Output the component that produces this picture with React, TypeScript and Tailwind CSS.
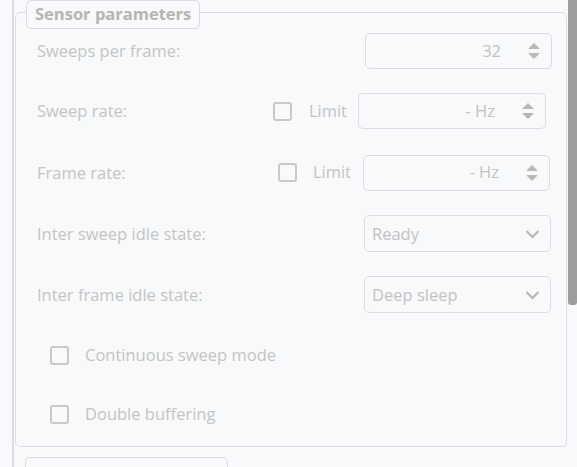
import React from "react";

const font = { fontFamily: '"Open Sans", "Noto Sans", sans-serif' };

function Spin({ value, w, mr }: { value: string; w: string; mr: string }) {
  return (
    <div className={`${w} ${mr} h-[36px] rounded-[5px] border border-[#dcdde0] bg-[#f8f9fa] flex items-center justify-end`}>
      <span className="text-[16.5px] text-[#c2c2c2] mr-[27px]">{value}</span>
      <svg width="12" height="18" viewBox="0 0 12 18" className="mr-[11px]">
        <path d="M1 6.5 L6 1.5 L11 6.5 Z" fill="#b8b8b8" stroke="#b8b8b8" strokeLinejoin="round" />
        <path d="M1 11.5 L6 16.5 L11 11.5 Z" fill="#b8b8b8" stroke="#b8b8b8" strokeLinejoin="round" />
      </svg>
    </div>
  );
}

function Combo({ value }: { value: string }) {
  return (
    <div className="w-[187px] mr-[15px] h-[37px] rounded-[5px] border border-[#dcdde0] bg-[#f8f9fa] flex items-center">
      <span className="text-[16.5px] text-[#c2c2c2] ml-[7px] flex-1 pt-[2px]">{value}</span>
      <svg width="15" height="10" viewBox="0 0 15 10" className="mr-[10px]">
        <path d="M1.5 2 L7.5 8 L13.5 2" fill="none" stroke="#b8b8b8" strokeWidth="2.2" />
      </svg>
    </div>
  );
}

function Check() {
  return <div className="w-[19px] h-[19px] rounded-[3px] border-2 border-[#c9c9c9] bg-[#f8f9fa] shrink-0" />;
}

export default function App() {
  return (
    <div style={font} className="w-[577px] h-[467px] bg-[#f8f9fa] overflow-hidden flex">
      <div className="flex-1 pl-[12px]">
        <div className="h-full border-l-2 border-[#dcdde0] pl-[1px] pt-[12px]">
          <div className="w-[552px] h-[435px] rounded-[5px] border border-[#dcdde0] flex flex-col">
            <div className="-mt-[13px] ml-[10px] w-[174px] h-[29px] rounded-[5px] border border-[#dcdde0] bg-[#f8f9fa] flex items-center pl-[8px]">
              <span className="text-[16.5px] font-bold text-[#b5b5b5] leading-none">Sensor parameters</span>
            </div>

            <div className="mt-[4px] h-[36px] flex items-center">
              <span className="ml-[21px] text-[16.5px] text-[#c4c4c4]">Sweeps per frame:</span>
              <div className="ml-auto"><Spin value="32" w="w-[187px]" mr="mr-[14px]" /></div>
            </div>

            <div className="mt-[24px] h-[36px] flex items-center">
              <span className="ml-[21px] text-[16.5px] text-[#c4c4c4]">Sweep rate:</span>
              <div className="ml-auto flex items-center">
                <Check />
                <span className="ml-[17px] mr-[11px] text-[16.5px] text-[#c4c4c4]">Limit</span>
                <Spin value="- Hz" w="w-[188px]" mr="mr-[20px]" />
              </div>
            </div>

            <div className="mt-[26px] h-[35px] flex items-center">
              <span className="ml-[21px] text-[16.5px] text-[#c4c4c4] pt-[1px]">Frame rate:</span>
              <div className="ml-auto flex items-center">
                <Check />
                <span className="ml-[16px] mr-[12px] text-[16.5px] text-[#c4c4c4]">Limit</span>
                <Spin value="- Hz" w="w-[187px]" mr="mr-[16px]" />
              </div>
            </div>

            <div className="mt-[25px] h-[37px] flex items-center">
              <span className="ml-[21px] text-[16.5px] text-[#c4c4c4] pt-[2px]">Inter sweep idle state:</span>
              <div className="ml-auto"><Combo value="Ready" /></div>
            </div>

            <div className="mt-[24px] h-[37px] flex items-center">
              <span className="ml-[21px] text-[16.5px] text-[#c4c4c4] pt-[2px]">Inter frame idle state:</span>
              <div className="ml-auto"><Combo value="Deep sleep" /></div>
            </div>

            <div className="mt-[32px] h-[20px] flex items-center ml-[34px]">
              <Check />
              <span className="ml-[16px] text-[16.5px] text-[#c4c4c4]">Continuous sweep mode</span>
            </div>

            <div className="mt-[39px] h-[20px] flex items-center ml-[34px]">
              <Check />
              <span className="ml-[16px] text-[16.5px] text-[#c4c4c4]">Double buffering</span>
            </div>
          </div>
          <div className="mt-[10px] ml-[10px] w-[203px] h-[30px] rounded-[5px] border border-[#dcdde0]" />
        </div>
      </div>
      <div className="w-[10px] h-full flex flex-col items-end">
        <div className="w-[9px] h-[305px] bg-[#9d9d9d] rounded-b-[3px]" />
      </div>
    </div>
  );
}
